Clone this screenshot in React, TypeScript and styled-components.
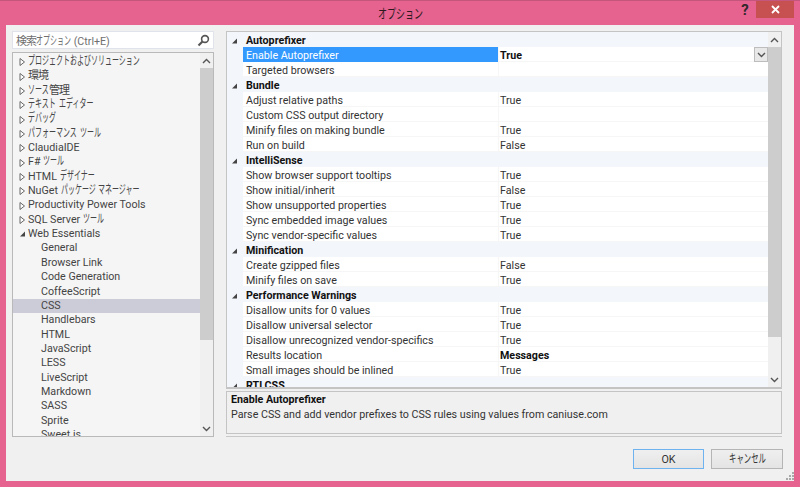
import React, { FC } from "react";
import styled, { createGlobalStyle } from "styled-components";

const Global = createGlobalStyle`
  html, body { margin: 0; padding: 0; background: #e6628f; }
  * { box-sizing: border-box; }
`;

const Window = styled.div`
  width: 800px;
  height: 487px;
  display: flex;
  flex-direction: column;
  background: #e6628f;
  border-top: 1px solid #c4557c;
  padding: 0 6px 6px;
  overflow: hidden;
  font-family: Roboto, "Noto Sans CJK JP", sans-serif;
  font-size: 10.7px;
  color: #1e1e1e;
`;

// かなは Meiryo UI のように細いので横に縮める
const Kana = styled.span<{ $count: number; $advance: number; $size: number }>`
  display: inline-block;
  width: ${(p) => p.$count * p.$advance}px;
  font-size: ${(p) => p.$size}px;
  line-height: 1;
  white-space: nowrap;
  transform: scaleX(${(p) => p.$advance / p.$size});
  transform-origin: 0 50%;
`;

const Kanji = styled.span`
  letter-spacing: -1px;
  font-size: 11px;
`;

const TitleBar = styled.div`
  height: 24px;
  flex: none;
  display: flex;
  align-items: flex-start;
  position: relative;
`;

const Title = styled.div`
  position: absolute;
  left: 0;
  right: 0;
  top: 6px;
  text-align: center;
  color: #2a1a20;
`;

const CaptionButtons = styled.div`
  margin-left: auto;
  display: flex;
  align-items: flex-start;
  z-index: 1;
`;

const Help = styled.div`
  width: 22px;
  height: 18px;
  text-align: center;
  font-size: 15px;
  line-height: 18px;
  font-weight: 700;
  color: #33282c;
`;

const Close = styled.div`
  width: 38px;
  height: 17px;
  background: #c75150;
  display: flex;
  align-items: center;
  justify-content: center;
`;

const Body = styled.div`
  flex: 1;
  background: #f0f0f0;
  padding: 6px 11px 0 6px;
  display: flex;
  flex-direction: column;
  min-height: 0;
`;

const Columns = styled.div`
  display: flex;
  gap: 12px;
  height: 406px;
  flex: none;
`;

const LeftPane = styled.div`
  width: 202px;
  flex: none;
  display: flex;
  flex-direction: column;
  gap: 3px;
`;

const SearchBox = styled.div`
  height: 18px;
  flex: none;
  background: #fff;
  border: 1px solid #e1e3ea;
  display: flex;
  align-items: center;
  justify-content: space-between;
  padding: 0 3px;
  color: #6f6f6f;
`;

const Framed = styled.div`
  flex: 1;
  min-height: 0;
  display: flex;
  border: 1px solid #b9b9b9;
  background: #fff;
`;

const TreeList = styled.div`
  flex: 1;
  min-width: 0;
  overflow: hidden;
  padding-top: 2px;
  background: #f5f5f5;
`;

const TreeRow = styled.div<{ $indent: number; $selected?: boolean }>`
  height: 14.35px;
  line-height: 14.35px;
  display: flex;
  align-items: center;
  white-space: pre;
  padding-left: ${(p) => p.$indent}px;
  background: ${(p) => (p.$selected ? "#ccccd9" : "transparent")};
  color: #444;
`;

const Expander = styled.svg`
  width: 7px;
  height: 8px;
  margin-right: 2px;
  flex: none;
`;

const Scrollbar = styled.div`
  width: 13px;
  flex: none;
  display: flex;
  flex-direction: column;
  background: #f0f0f0;
`;

const ScrollArrow = styled.div`
  height: 15px;
  flex: none;
  display: flex;
  align-items: center;
  justify-content: center;
  background: #f0f0f0;
`;

const Track = styled.div`
  flex: 1;
  min-height: 0;
`;

const Thumb = styled.div<{ $height: number }>`
  height: ${(p) => p.$height}px;
  background: #cdcdcd;
`;

const RightPane = styled.div`
  width: 556px;
  flex: none;
  display: flex;
  flex-direction: column;
`;

const GridFrame = styled(Framed)`
  flex: none;
  height: 358px;
  border-width: 1px 1px 2px 1px;
  border-color: #c4c4c4;
`;

const Grid = styled.div`
  flex: 1;
  min-width: 0;
  overflow: hidden;
`;

const CategoryRow = styled.div`
  height: 15px;
  display: flex;
  align-items: center;
  padding-top: 2px;
  background: #f3f6fb;
  font-weight: 700;
  color: #111;
  line-height: 13px;
`;

const CategoryGlyph = styled.svg`
  width: 16px;
  height: 8px;
  margin-right: 3px;
  flex: none;
`;

const PropRow = styled.div`
  height: 15px;
  display: flex;
  line-height: 13px;
  background: #f3f6fb;
`;

const PropName = styled.div<{ $selected?: boolean }>`
  width: 255px;
  margin-left: 16px;
  padding: 2px 0 0 3px;
  flex: none;
  background: ${(p) => (p.$selected ? "#3399ff" : "#fff")};
  color: ${(p) => (p.$selected ? "#fff" : "#333")};
  border-bottom: 1px solid ${(p) => (p.$selected ? "#3399ff" : "#f6f6f6")};
  white-space: nowrap;
`;

const PropValue = styled.div<{ $bold?: boolean }>`
  flex: 1;
  position: relative;
  padding: 2px 0 0 1px;
  background: #fff;
  border-left: 1px solid #f6f6f6;
  border-bottom: 1px solid #f6f6f6;
  font-weight: ${(p) => (p.$bold ? 700 : 400)};
  color: ${(p) => (p.$bold ? "#111" : "#333")};
`;

const DropButton = styled.div`
  position: absolute;
  right: 0;
  top: 0;
  width: 14px;
  height: 15px;
  background: #e8e8e8;
  border: 1px solid #bdbdbd;
  display: flex;
  align-items: center;
  justify-content: center;
`;

const Description = styled.div`
  flex: none;
  height: 43px;
  margin-top: 2px;
  padding: 0 4px;
  border: 1px solid #c4c4c4;
  background: #f0f0f0;
  line-height: 15px;
  color: #333;
`;

const DescTitle = styled.div`
  font-weight: 700;
  color: #111;
`;

const Rule = styled.div`
  height: 1px;
  margin-top: 2px;
  background: #c8c8c8;
`;

const Footer = styled.div`
  display: flex;
  justify-content: flex-end;
  gap: 7px;
  margin-top: 12px;
  position: relative;
`;

const Button = styled.div<{ $default?: boolean }>`
  width: ${(p) => (p.$default ? 71 : 72)}px;
  height: 20px;
  display: flex;
  align-items: center;
  justify-content: center;
  background: linear-gradient(#efefef, #e4e4e4);
  border: 1px solid ${(p) => (p.$default ? "#6fb2f0" : "#b5b5b5")};
  color: #333;
`;

const Grip = styled.svg`
  position: absolute;
  right: -11px;
  bottom: -11px;
  width: 8px;
  height: 8px;
`;

const Jp: FC<{ text: string; advance?: number; size?: number }> = ({ text, advance = 7, size = 12 }) => (
  <span>
    {(text.match(/[\u3040-\u30ff]+|[\u4e00-\u9fff]+|[^\u3040-\u30ff\u4e00-\u9fff]+/g) || []).map((part, i) => {
      if (/[\u3040-\u30ff]/.test(part))
        return (
          <Kana key={i} $count={part.length} $advance={advance} $size={size}>
            {part}
          </Kana>
        );
      if (/[\u4e00-\u9fff]/.test(part)) return <Kanji key={i}>{part}</Kanji>;
      return part;
    })}
  </span>
);

const Chevron: FC<{ up?: boolean }> = ({ up }) => (
  <svg width="9" height="6" viewBox="0 0 9 6">
    <path d={up ? "M1 5 L4.5 1.5 L8 5" : "M1 1 L4.5 4.5 L8 1"} fill="none" stroke="#555" strokeWidth="1.4" />
  </svg>
);

const topNodes = [
  "プロジェクトおよびソリューション",
  "環境",
  "ソース管理",
  "テキスト エディター",
  "デバッグ",
  "パフォーマンス ツール",
  "ClaudiaIDE",
  "F# ツール",
  "HTML デザイナー",
  "NuGet パッケージ マネージャー",
  "Productivity Power Tools",
  "SQL Server ツール",
];

const webNodes = [
  "General",
  "Browser Link",
  "Code Generation",
  "CoffeeScript",
  "CSS",
  "Handlebars",
  "HTML",
  "JavaScript",
  "LESS",
  "LiveScript",
  "Markdown",
  "SASS",
  "Sprite",
  "Sweet.js",
];

type Prop = [string, string, boolean?];

const categories: { name: string; props: Prop[] }[] = [
  {
    name: "Autoprefixer",
    props: [
      ["Enable Autoprefixer", "True", true],
      ["Targeted browsers", ""],
    ],
  },
  {
    name: "Bundle",
    props: [
      ["Adjust relative paths", "True"],
      ["Custom CSS output directory", ""],
      ["Minify files on making bundle", "True"],
      ["Run on build", "False"],
    ],
  },
  {
    name: "IntelliSense",
    props: [
      ["Show browser support tooltips", "True"],
      ["Show initial/inherit", "False"],
      ["Show unsupported properties", "True"],
      ["Sync embedded image values", "True"],
      ["Sync vendor-specific values", "True"],
    ],
  },
  {
    name: "Minification",
    props: [
      ["Create gzipped files", "False"],
      ["Minify files on save", "True"],
    ],
  },
  {
    name: "Performance Warnings",
    props: [
      ["Disallow units for 0 values", "True"],
      ["Disallow universal selector", "True"],
      ["Disallow unrecognized vendor-specifics", "True"],
      ["Results location", "Messages", true],
      ["Small images should be inlined", "True"],
    ],
  },
  { name: "RTLCSS", props: [] },
];

const ClosedArrow = () => (
  <Expander viewBox="0 0 7 8">
    <path d="M1 0.5 L5.5 4 L1 7.5 Z" fill="#fff" stroke="#666" strokeWidth="1" />
  </Expander>
);

const OpenArrow = () => (
  <Expander viewBox="0 0 7 8">
    <path d="M6 1.5 L6 6.5 L1 6.5 Z" fill="#444" />
  </Expander>
);

export default function App() {
  return (
    <Window>
      <Global />
      <TitleBar>
        <Title>
          <Jp text="オプション" advance={9} size={13} />
        </Title>
        <CaptionButtons>
          <Help>?</Help>
          <Close>
            <svg width="9" height="9" viewBox="0 0 9 9">
              <path d="M1 1 L8 8 M8 1 L1 8" stroke="#fff" strokeWidth="1.8" />
            </svg>
          </Close>
        </CaptionButtons>
      </TitleBar>
      <Body>
        <Columns>
          <LeftPane>
            <SearchBox>
              <Jp text="検索オプション (Ctrl+E)" />
              <svg width="13" height="13" viewBox="0 0 13 13">
                <circle cx="8" cy="5" r="3.4" fill="none" stroke="#555" strokeWidth="1.6" />
                <path d="M5.5 7.5 L1.5 11.5" stroke="#555" strokeWidth="2.2" />
              </svg>
            </SearchBox>
            <Framed>
              <TreeList>
                {topNodes.map((n) => (
                  <TreeRow key={n} $indent={6}>
                    <ClosedArrow />
                    <Jp text={n} />
                  </TreeRow>
                ))}
                <TreeRow $indent={6}>
                  <OpenArrow />
                  Web Essentials
                </TreeRow>
                {webNodes.map((n) => (
                  <TreeRow key={n} $indent={28} $selected={n === "CSS"}>
                    {n}
                  </TreeRow>
                ))}
              </TreeList>
              <Scrollbar>
                <ScrollArrow>
                  <Chevron up />
                </ScrollArrow>
                <Track>
                  <Thumb $height={272} />
                </Track>
                <ScrollArrow>
                  <Chevron />
                </ScrollArrow>
              </Scrollbar>
            </Framed>
          </LeftPane>
          <RightPane>
            <GridFrame>
              <Grid>
                {categories.map((c) => (
                  <React.Fragment key={c.name}>
                    <CategoryRow>
                      <CategoryGlyph viewBox="0 0 16 8">
                        <path d="M10 1.5 L10 6.5 L5 6.5 Z" fill="#444" />
                      </CategoryGlyph>
                      {c.name}
                    </CategoryRow>
                    {c.props.map(([name, value, bold]) => (
                      <PropRow key={name}>
                        <PropName $selected={name === "Enable Autoprefixer"}>{name}</PropName>
                        <PropValue $bold={bold}>
                          {value}
                          {name === "Enable Autoprefixer" && (
                            <DropButton>
                              <Chevron />
                            </DropButton>
                          )}
                        </PropValue>
                      </PropRow>
                    ))}
                  </React.Fragment>
                ))}
              </Grid>
              <Scrollbar>
                <ScrollArrow>
                  <Chevron up />
                </ScrollArrow>
                <Track>
                  <Thumb $height={290} />
                </Track>
                <ScrollArrow>
                  <Chevron />
                </ScrollArrow>
              </Scrollbar>
            </GridFrame>
            <Description>
              <DescTitle>Enable Autoprefixer</DescTitle>
              Parse CSS and add vendor prefixes to CSS rules using values from caniuse.com
            </Description>
            <Rule />
          </RightPane>
        </Columns>
        <Footer>
          <Button $default>OK</Button>
          <Button>
            <Jp text="キャンセル" advance={7.4} />
          </Button>
          <Grip viewBox="0 0 8 8">
            <path d="M6 0h2v2H6z M3 3h2v2H3z M6 3h2v2H6z M0 6h2v2H0z M3 6h2v2H3z M6 6h2v2H6z" fill="#a9a9a9" />
          </Grip>
        </Footer>
      </Body>
    </Window>
  );
}
